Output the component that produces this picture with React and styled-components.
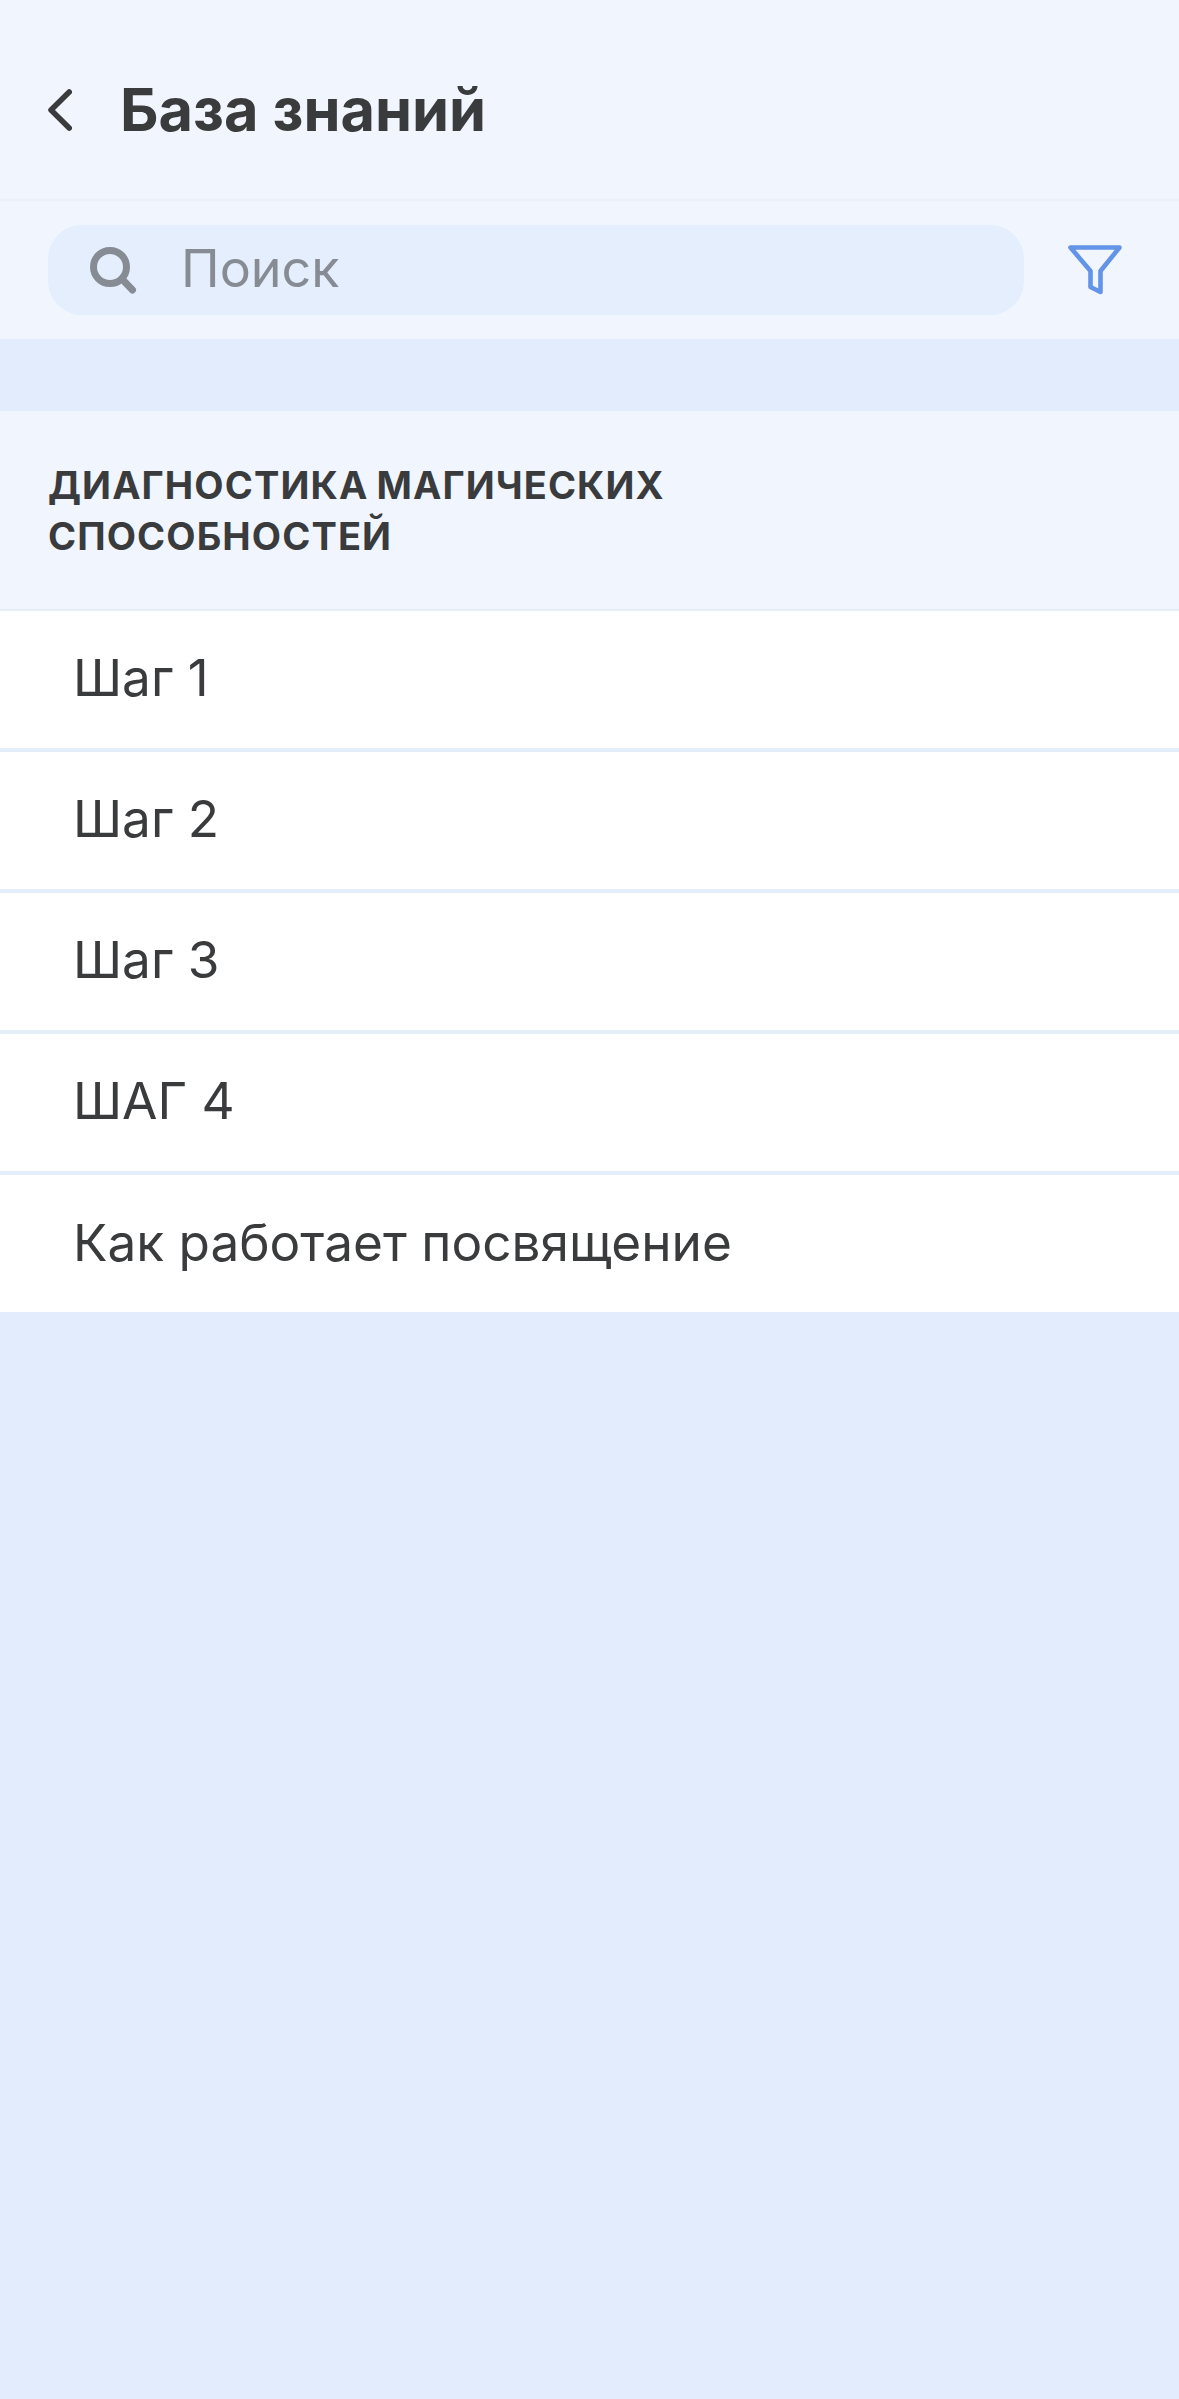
import React from "react";
import styled, { createGlobalStyle } from "styled-components";

const Global = createGlobalStyle`
  html, body { margin: 0; padding: 0; background: #e2ecfd; }
  * { box-sizing: border-box; }
`;

const Page = styled.div`
  width: 1179px;
  height: 2399px;
  overflow: hidden;
  background: #e2ecfd;
  color: #3a3b3c;
  font-family: Inter, "Noto Sans", sans-serif;
`;

const Header = styled.header`
  height: 201px;
  display: flex;
  align-items: center;
  gap: 48px;
  padding: 21px 0 0 48px;
  background: #f0f5fe;
  border-bottom: 2px solid #ebf1fc;
`;

const Back = styled.svg`
  width: 24px;
  height: 42px;
  flex: none;
`;

const Title = styled.h1`
  margin: 0 0 2px;
  font-size: 59.5px;
  line-height: 68px;
  font-weight: 700;
`;

const SearchBar = styled.div`
  height: 138px;
  display: flex;
  align-items: center;
  padding: 0 57px 0 48px;
  background: #f0f5fe;
`;

const SearchField = styled.div`
  width: 976px;
  height: 90px;
  display: flex;
  align-items: center;
  gap: 44px;
  padding-left: 42px;
  background: #e4eefc;
  border-radius: 34px;
`;

const SearchIcon = styled.svg`
  width: 47px;
  height: 47px;
  flex: none;
`;

const Placeholder = styled.span`
  font-size: 52px;
  line-height: 60px;
  margin-bottom: 2px;
  color: #878b94;
`;

const FilterIcon = styled.svg`
  width: 54px;
  height: 50px;
  margin-left: auto;
  flex: none;
`;

const Band = styled.div`
  height: 72px;
`;

const SectionHead = styled.div`
  height: 200px;
  padding: 49px 48px 0;
  background: #f0f5fe;
  border-bottom: 2px solid #e7eefb;
`;

const SectionTitle = styled.h2`
  margin: 0;
  width: 680px;
  font-size: 38px;
  line-height: 51px;
  font-weight: 700;
  letter-spacing: 1.1px;
  word-spacing: -2px;
  text-transform: uppercase;
`;

const List = styled.ul`
  margin: 0;
  padding: 0;
  list-style: none;
`;

const Row = styled.li`
  height: 141px;
  display: flex;
  align-items: center;
  padding: 0 0 5px 73px;
  background: #fff;
  border-bottom: 4px solid #e4edfa;
  font-size: 51.3px;
  line-height: 60px;
  &:last-child {
    height: 137px;
    padding-bottom: 3px;
    border-bottom: 0;
  }
`;

const rows = ["Шаг 1", "Шаг 2", "Шаг 3", "ШАГ 4", "Как работает посвящение"];

export default function App() {
  return (
    <Page>
      <Global />
      <Header>
        <Back viewBox="0 0 24 42" fill="none" stroke="#3a3b3c" strokeWidth="5.5" strokeLinecap="round" strokeLinejoin="round">
          <path d="M21.2 3 L3 21 L21.2 39" />
        </Back>
        <Title>База знаний</Title>
      </Header>
      <SearchBar>
        <SearchField>
          <SearchIcon viewBox="0 0 47 47" fill="none" stroke="#878b94" strokeLinecap="round">
            <circle cx="20" cy="20" r="16.5" strokeWidth="7" />
            <path d="M32 32 L42.5 43" strokeWidth="7" />
          </SearchIcon>
          <Placeholder>Поиск</Placeholder>
        </SearchField>
        <FilterIcon viewBox="0 0 54 50" fill="none" stroke="#6394e8" strokeWidth="4.6" strokeLinecap="round" strokeLinejoin="round">
          <path d="M2.5 2.5 H51.5 L32.5 26 V47 L22.5 42 V26 Z" />
        </FilterIcon>
      </SearchBar>
      <Band />
      <SectionHead>
        <SectionTitle>Диагностика магических способностей</SectionTitle>
      </SectionHead>
      <List>
        {rows.map((r) => (
          <Row key={r}>{r}</Row>
        ))}
      </List>
    </Page>
  );
}
